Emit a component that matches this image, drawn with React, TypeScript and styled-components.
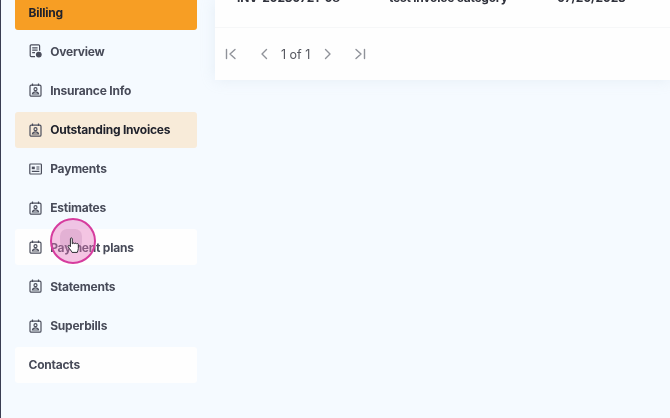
import React from "react";
import styled, { createGlobalStyle } from "styled-components";

const Global = createGlobalStyle`
  html, body { margin: 0; padding: 0; height: 100%; overflow: hidden; background: #f5faff; }
  #root { height: 100%; }
`;

const Page = styled.div`
  position: relative;
  width: 670px;
  height: 418px;
  overflow: hidden;
  display: flex;
  align-items: flex-start;
  box-sizing: border-box;
  border-left: 1px solid #3a3d52;
  background: #f5faff;
  font-family: Inter, "Liberation Sans", sans-serif;
  filter: blur(0.4px);
`;

const Sidebar = styled.nav`
  width: 182px;
  margin: -6px 0 0 14px;
  display: flex;
  flex-direction: column;
  gap: 3.2px;
  flex: none;
`;

const Item = styled.div<{ $variant?: "primary" | "active" | "white" }>`
  height: 36px;
  box-sizing: border-box;
  display: flex;
  align-items: center;
  gap: 8.7px;
  padding-left: 13.5px;
  border-radius: 3px;
  font-size: 12px;
  font-weight: 700;
  letter-spacing: -0.22px;
  white-space: nowrap;
  color: ${(p) => (p.$variant === "primary" || p.$variant === "active" ? "#20222c" : "#484b59")};
  background: ${(p) =>
    p.$variant === "primary" ? "#f79e24" : p.$variant === "active" ? "#f8ebd9" : p.$variant === "white" ? "#fefefe" : "transparent"};
`;

const IconBox = styled.svg`
  width: 13px;
  height: 14px;
  flex: none;
  fill: none;
  stroke: #4b4e5c;
  stroke-width: 1.2;
`;

const Main = styled.main`
  width: 455px;
  margin-left: 18px;
  flex: none;
  background: #fefefe;
  box-shadow: 0 0 14px rgba(170, 190, 205, 0.2);
`;

const Row = styled.div`
  height: 37px;
  margin-top: -9px;
  box-sizing: border-box;
  display: grid;
  grid-template-columns: 152px 168px 1fr;
  padding-left: 22px;
  font-size: 12px;
  font-weight: 700;
  letter-spacing: -0.22px;
  line-height: 14px;
  color: #30323c;
  border-bottom: 1.5px solid #f6f7f8;
  white-space: nowrap;
`;

const Pager = styled.div`
  height: 52px;
  display: flex;
  align-items: center;
  padding: 0 0 0 9px;
  color: #55575f;
  font-size: 12.5px;
`;

const PageBtn = styled.svg<{ $gap: number }>`
  width: 14px;
  height: 14px;
  margin-right: ${(p) => p.$gap}px;
  flex: none;
  fill: none;
  stroke: #8f9299;
  stroke-width: 1.4;
  stroke-linecap: round;
  stroke-linejoin: round;
`;

const PageLabel = styled.span`
  margin-right: 11px;
`;

const CursorRing = styled.div`
  position: absolute;
  left: 49px;
  top: 218px;
  width: 46px;
  height: 46px;
  border-radius: 50%;
  background: rgba(230, 120, 190, 0.42);
  border: 2px solid #d63c9e;
  box-sizing: border-box;
`;

const CursorDot = styled.div`
  position: absolute;
  left: 8px;
  top: 9px;
  width: 22px;
  height: 20px;
  border-radius: 7px;
  background: rgba(170, 110, 160, 0.22);
`;

const Hand = styled.svg`
  position: absolute;
  left: 15px;
  top: 17px;
  width: 13px;
  height: 17px;
`;

const Person = () => (
  <IconBox viewBox="0 0 13 14">
    <rect x="1" y="2.2" width="11" height="11" rx="1.3" />
    <path d="M3.5 0.6v2.4M9.5 0.6v2.4" />
    <circle cx="6.5" cy="6.2" r="1.5" />
    <path d="M3.4 11c.3-1.6 1.5-2.2 3.1-2.2s2.8.6 3.1 2.2z" />
  </IconBox>
);

const Report = () => (
  <IconBox viewBox="0 0 13 14">
    <path d="M6 12.6H2.2a1 1 0 0 1-1-1V1.8a1 1 0 0 1 1-1h7.4a1 1 0 0 1 1 1v5" />
    <path d="M3.2 3.8h5.4M3.2 6.2h5.4M3.2 8.6h2.8" />
    <circle cx="9.8" cy="10.6" r="2.3" fill="#4b4e5c" />
  </IconBox>
);

const Card = () => (
  <IconBox viewBox="0 0 13 14">
    <rect x="0.8" y="2" width="11.6" height="10" rx="0.8" />
    <rect x="2.8" y="4.6" width="3" height="2.6" fill="#4b4e5c" stroke="none" />
    <path d="M7.4 5h3M7.4 7h3M2.8 9.4h7.6" />
  </IconBox>
);

export default function App() {
  return (
    <>
      <Global />
      <Page>
        <Sidebar>
          <Item $variant="primary">Billing</Item>
          <Item><Report />Overview</Item>
          <Item><Person />Insurance Info</Item>
          <Item $variant="active"><Person />Outstanding Invoices</Item>
          <Item><Card />Payments</Item>
          <Item><Person />Estimates</Item>
          <Item $variant="white"><Person />Payment plans</Item>
          <Item><Person />Statements</Item>
          <Item><Person />Superbills</Item>
          <Item $variant="white">Contacts</Item>
        </Sidebar>
        <Main>
          <Row>
            <span>INV-20230721-08</span>
            <span>test invoice category</span>
            <span>07/20/2023</span>
          </Row>
          <Pager>
            <PageBtn $gap={19} viewBox="0 0 14 14"><path d="M2.5 2.5v9M11 2.5 6 7l5 4.5" /></PageBtn>
            <PageBtn $gap={10} viewBox="0 0 14 14"><path d="M9.5 2.5 5 7l4.5 4.5" /></PageBtn>
            <PageLabel>1 of 1</PageLabel>
            <PageBtn $gap={18} viewBox="0 0 14 14"><path d="M4.5 2.5 9 7l-4.5 4.5" /></PageBtn>
            <PageBtn $gap={0} viewBox="0 0 14 14"><path d="M3 2.5 8 7l-5 4.5M11.5 2.5v9" /></PageBtn>
          </Pager>
        </Main>
        <CursorRing>
          <CursorDot />
          <Hand viewBox="0 0 13 17">
            <path
              d="M3.4 1.8c0-1.2 1.9-1.2 1.9 0v5l.4-.1c0-1 1.7-1 1.7 0l.3.1c.1-.9 1.6-.9 1.7.1l.3.1c.2-.7 1.6-.6 1.6.4v4.2c0 1.6-.7 2.4-1 3.8H5c-.6-1.6-2.2-3.2-3.8-5.6-.7-1.1.6-2 1.4-1.1l.8 1z"
              fill="#fff"
              stroke="#2a2a30"
              strokeWidth="1"
              strokeLinejoin="round"
            />
          </Hand>
        </CursorRing>
      </Page>
    </>
  );
}
